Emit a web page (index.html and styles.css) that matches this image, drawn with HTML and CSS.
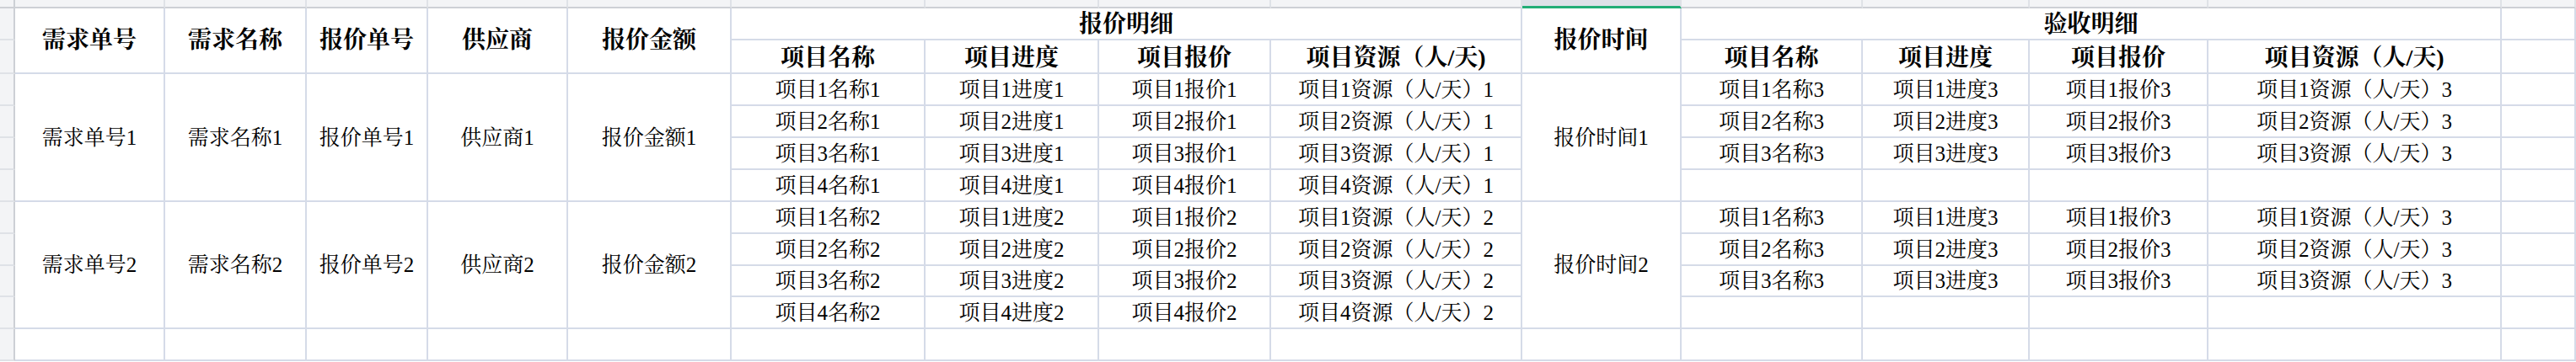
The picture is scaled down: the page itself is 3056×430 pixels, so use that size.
FILE: index.html
```html
<!DOCTYPE html>
<html lang="zh-CN">
<head>
<meta charset="utf-8">
<title>报价明细</title>
<link rel="stylesheet" href="styles.css">
</head>
<body>
<div class="sheet">
  <!-- column header strip -->
  <div class="corner"></div>
  <div class="ch"></div><div class="ch"></div><div class="ch"></div><div class="ch"></div><div class="ch"></div>
  <div class="ch"></div><div class="ch"></div><div class="ch"></div><div class="ch"></div>
  <div class="ch sel"></div>
  <div class="ch"></div><div class="ch"></div><div class="ch"></div><div class="ch"></div><div class="ch"></div>

  <!-- header row 1 -->
  <div class="rh"></div>
  <div class="c h r2">需求单号</div>
  <div class="c h r2">需求名称</div>
  <div class="c h r2">报价单号</div>
  <div class="c h r2">供应商</div>
  <div class="c h r2">报价金额</div>
  <div class="c h hb s4">报价明细</div>
  <div class="c h r2">报价时间</div>
  <div class="c h hb s4">验收明细</div>
  <div class="c"></div>

  <!-- header row 2 -->
  <div class="rh"></div>
  <div class="c h hb">项目名称</div>
  <div class="c h hb">项目进度</div>
  <div class="c h hb">项目报价</div>
  <div class="c h hb">项目资源（人/天)</div>
  <div class="c h hb">项目名称</div>
  <div class="c h hb">项目进度</div>
  <div class="c h hb">项目报价</div>
  <div class="c h hb">项目资源（人/天)</div>
  <div class="c"></div>

  <!-- block 1 -->
  <div class="rh"></div>
  <div class="c r4">需求单号1</div>
  <div class="c r4">需求名称1</div>
  <div class="c r4">报价单号1</div>
  <div class="c r4">供应商1</div>
  <div class="c r4">报价金额1</div>
  <div class="c">项目1名称1</div>
  <div class="c">项目1进度1</div>
  <div class="c">项目1报价1</div>
  <div class="c">项目1资源（人/天）1</div>
  <div class="c r4">报价时间1</div>
  <div class="c">项目1名称3</div>
  <div class="c">项目1进度3</div>
  <div class="c">项目1报价3</div>
  <div class="c">项目1资源（人/天）3</div>
  <div class="c"></div>

  <div class="rh"></div>
  <div class="c">项目2名称1</div>
  <div class="c">项目2进度1</div>
  <div class="c">项目2报价1</div>
  <div class="c">项目2资源（人/天）1</div>
  <div class="c">项目2名称3</div>
  <div class="c">项目2进度3</div>
  <div class="c">项目2报价3</div>
  <div class="c">项目2资源（人/天）3</div>
  <div class="c"></div>

  <div class="rh"></div>
  <div class="c">项目3名称1</div>
  <div class="c">项目3进度1</div>
  <div class="c">项目3报价1</div>
  <div class="c">项目3资源（人/天）1</div>
  <div class="c">项目3名称3</div>
  <div class="c">项目3进度3</div>
  <div class="c">项目3报价3</div>
  <div class="c">项目3资源（人/天）3</div>
  <div class="c"></div>

  <div class="rh"></div>
  <div class="c">项目4名称1</div>
  <div class="c">项目4进度1</div>
  <div class="c">项目4报价1</div>
  <div class="c">项目4资源（人/天）1</div>
  <div class="c"></div><div class="c"></div><div class="c"></div><div class="c"></div>
  <div class="c"></div>

  <!-- block 2 -->
  <div class="rh"></div>
  <div class="c r4">需求单号2</div>
  <div class="c r4">需求名称2</div>
  <div class="c r4">报价单号2</div>
  <div class="c r4">供应商2</div>
  <div class="c r4">报价金额2</div>
  <div class="c">项目1名称2</div>
  <div class="c">项目1进度2</div>
  <div class="c">项目1报价2</div>
  <div class="c">项目1资源（人/天）2</div>
  <div class="c r4">报价时间2</div>
  <div class="c">项目1名称3</div>
  <div class="c">项目1进度3</div>
  <div class="c">项目1报价3</div>
  <div class="c">项目1资源（人/天）3</div>
  <div class="c"></div>

  <div class="rh"></div>
  <div class="c">项目2名称2</div>
  <div class="c">项目2进度2</div>
  <div class="c">项目2报价2</div>
  <div class="c">项目2资源（人/天）2</div>
  <div class="c">项目2名称3</div>
  <div class="c">项目2进度3</div>
  <div class="c">项目2报价3</div>
  <div class="c">项目2资源（人/天）3</div>
  <div class="c"></div>

  <div class="rh"></div>
  <div class="c">项目3名称2</div>
  <div class="c">项目3进度2</div>
  <div class="c">项目3报价2</div>
  <div class="c">项目3资源（人/天）2</div>
  <div class="c">项目3名称3</div>
  <div class="c">项目3进度3</div>
  <div class="c">项目3报价3</div>
  <div class="c">项目3资源（人/天）3</div>
  <div class="c"></div>

  <div class="rh"></div>
  <div class="c">项目4名称2</div>
  <div class="c">项目4进度2</div>
  <div class="c">项目4报价2</div>
  <div class="c">项目4资源（人/天）2</div>
  <div class="c"></div><div class="c"></div><div class="c"></div><div class="c"></div>
  <div class="c"></div>

  <!-- empty row -->
  <div class="rh"></div>
  <div class="c"></div><div class="c"></div><div class="c"></div><div class="c"></div><div class="c"></div>
  <div class="c"></div><div class="c"></div><div class="c"></div><div class="c"></div><div class="c"></div>
  <div class="c"></div><div class="c"></div><div class="c"></div><div class="c"></div><div class="c"></div>
</div>
</body>
</html>
```
FILE: styles.css
```css
html, body {
  margin: 0;
  padding: 0;
  overflow: hidden;
  background: #ffffff;
}

.sheet {
  display: grid;
  width: 3056px;
  grid-template-columns: 18px 178px 168px 144px 166px 194px 230px 206px 204px 298px 189px 215px 198px 212px 348px 88px;
  grid-template-rows: 10px 38px 40px 38px 38px 38px 38px 38px 38px 37px 38px 38px;
  font-family: "Liberation Serif", "Noto Serif CJK SC", "Noto Sans CJK SC", serif;
  font-size: 25px;
  color: #000000;
}

.c {
  box-sizing: border-box;
  display: flex;
  align-items: center;
  justify-content: center;
  border-right: 2px solid #d5dbe8;
  border-bottom: 2px solid #d5dbe8;
  background: #ffffff;
  white-space: nowrap;
  overflow: hidden;
  line-height: 1;
}

.h {
  font-weight: 700;
  font-size: 28px;
}

.hb {
  align-items: flex-end;
  padding-bottom: 3px;
}

.r2 { grid-row: span 2; }
.r4 { grid-row: span 4; }
.s4 { grid-column: span 4; }

.corner {
  box-sizing: border-box;
  background: #f3f4f6;
  border-right: 2px solid #cdd0d5;
  border-bottom: 2px solid #cdd0d5;
}

.ch {
  box-sizing: border-box;
  background: #f3f4f6;
  border-right: 2px solid #dfe2e7;
  border-bottom: 2px solid #cdd0d5;
}

.ch.sel {
  background: #dde1e8;
  border-bottom: 3px solid #22ad76;
}

.rh {
  box-sizing: border-box;
  background: #f3f4f6;
  border-right: 2px solid #cdd0d5;
  border-bottom: 2px solid #dfe2e7;
}
```
